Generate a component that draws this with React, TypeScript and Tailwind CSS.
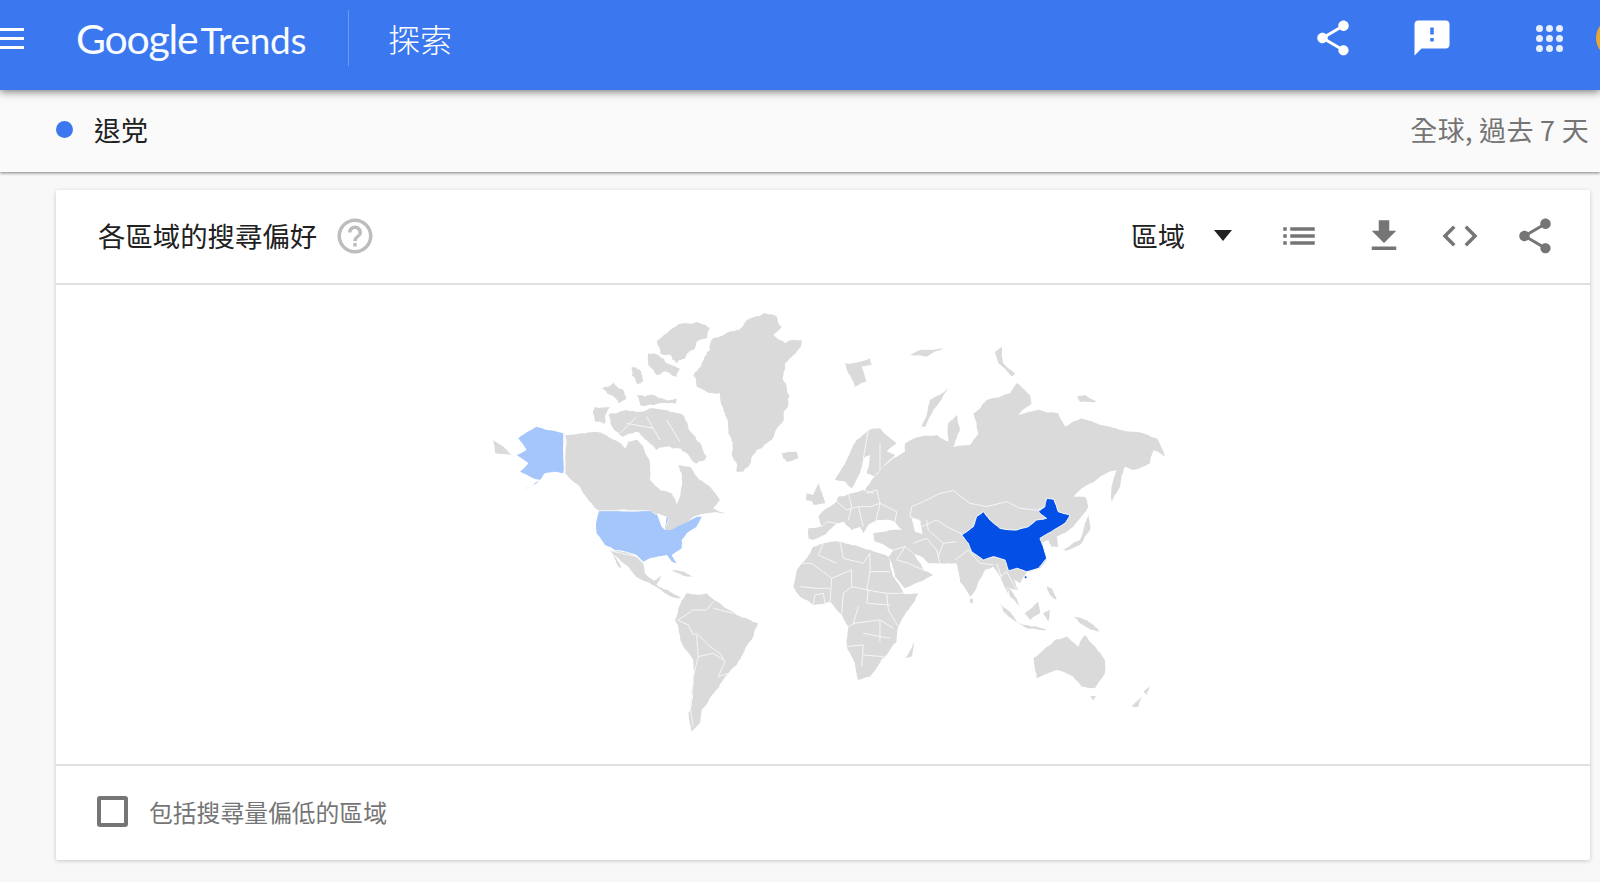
const cjk = "font-['Noto_Sans_CJK_TC','Noto_Sans',sans-serif]";

const share =
  "M18 16.08c-.76 0-1.44.3-1.96.77L8.91 12.7c.05-.23.09-.46.09-.7s-.04-.47-.09-.7l7.05-4.11c.54.5 1.25.81 2.04.81 1.66 0 3-1.34 3-3s-1.34-3-3-3-3 1.34-3 3c0 .24.04.47.09.7L8.04 9.81C7.5 9.31 6.79 9 6 9c-1.66 0-3 1.34-3 3s1.34 3 3 3c.79 0 1.5-.31 2.04-.81l7.12 4.16c-.05.21-.08.43-.08.65 0 1.61 1.31 2.92 2.92 2.92 1.61 0 2.92-1.31 2.92-2.92s-1.31-2.92-2.92-2.92z";
const feedback =
  "M20 2H4c-1.1 0-1.99.9-1.99 2L2 22l4-4h14c1.1 0 2-.9 2-2V4c0-1.1-.9-2-2-2zm-7 12h-2v-2h2v2zm0-4h-2V6h2v4z";
const download = "M19 9h-4V3H9v6H5l7 7 7-7zM5 18v2h14v-2H5z";
const code =
  "M9.4 16.6L4.8 12l4.6-4.6L8 6l-6 6 6 6 1.4-1.4zm5.2 0l4.6-4.6-4.6-4.6L16 6l6 6-6 6-1.4-1.4z";
const list =
  "M3 13h2v-2H3v2zm0 4h2v-2H3v2zm0-8h2V7H3v2zm4 4h14v-2H7v2zm0 4h14v-2H7v2zM7 7v2h14V7H7z";
const help =
  "M11 18h2v-2h-2v2zm1-16C6.48 2 2 6.48 2 12s4.48 10 10 10 10-4.48 10-10S17.52 2 12 2zm0 18c-4.41 0-8-3.59-8-8s3.59-8 8-8 8 3.59 8 8-3.59 8-8 8zm0-14c-2.21 0-4 1.79-4 4h2c0-1.1.9-2 2-2s2 .9 2 2c0 2-3 1.75-3 5h2c0-2.25 3-2.5 3-5 0-2.21-1.79-4-4-4z";

function Icon({ d, className }: { d: string; className: string }) {
  return (
    <svg viewBox="0 0 24 24" className={`h-[42px] w-[42px] shrink-0 fill-current ${className}`}>
      <path d={d} />
    </svg>
  );
}

// coastlines are traced coarse from the picture, then broken up a bit
function roughen(points: string, amount: number, seed: number) {
  let pts = points.split(" ").map((p) => p.split(",").map(Number));
  let s = seed + 1;
  const rnd = () => {
    s = (s * 16807) % 2147483647;
    return (s % 1000) / 1000 - 0.5;
  };
  for (let pass = 0; pass < 3; pass++) {
    const next: number[][] = [];
    pts.forEach((a, i) => {
      const b = pts[(i + 1) % pts.length];
      const dx = b[0] - a[0];
      const dy = b[1] - a[1];
      const k = rnd() * amount;
      next.push(a, [(a[0] + b[0]) / 2 - dy * k, (a[1] + b[1]) / 2 + dx * k]);
    });
    pts = next;
  }
  return pts.map((p) => `${p[0].toFixed(1)},${p[1].toFixed(1)}`).join(" ");
}

const arctic = [
  // greenland
  "640,225 665,190 690,150 700,115 740,100 770,90 800,60 850,40 890,50 905,80 880,105 915,130 965,120 940,165 915,190 920,260 925,310 905,370 875,420 830,450 790,515 770,515 755,460 745,400 735,340 720,280 680,275 650,260",
  "905,460 950,455 945,475 920,485",
  // arctic islands
  "530,125 560,100 610,70 650,65 690,85 680,115 650,125 640,150 615,175 590,190 570,165 540,160",
  "505,160 535,165 560,190 600,205 590,230 560,215 530,225 505,195",
  "455,200 480,210 490,245 470,250",
  "360,265 400,245 430,270 440,295 415,310 390,285",
  "470,285 520,285 590,295 585,312 530,312 480,315",
  "345,320 390,320 375,370 345,365",
  "385,345 440,330 520,325 570,335 610,345 625,385 655,425 680,470 650,490 630,470 600,445 560,440 530,450 500,420 470,395 430,410 400,385",
];

const americas = [
  // canada mainland
  "255,405 310,400 345,395 385,410 415,425 435,445 445,425 470,420 490,440 510,485 510,540 540,570 575,580 590,615 600,590 605,520 595,495 630,500 660,540 690,560 720,600 700,625 735,640 680,640 640,650 600,690 575,690 555,690 565,655 530,645 508,632 355,632 335,610 300,560 255,520",
  // russia tip
  "40,420 70,440 95,465 60,462 45,458",
  // mexico + central america
  "390,752 440,757 470,772 490,790 495,820 522,842 545,825 530,855 565,870 605,893 590,895 555,880 510,850 470,832 445,800 415,775",
  "395,755 425,805 415,800",
  "575,810 610,815 640,832 600,822",
  // south america
  "620,880 680,880 720,910 770,945 835,970 820,1010 790,1060 770,1095 745,1120 715,1165 690,1195 665,1230 660,1270 635,1295 625,1240 640,1140 640,1080 600,1010 585,960 595,925",
];

const usa = [
  "358,632 508,632 530,645 565,655 555,690 575,690 590,680 625,665 650,650 665,650 650,680 620,700 605,720 605,745 575,765 590,790 575,785 560,765 510,775 490,785 470,765 440,755 405,750 375,735 350,700 348,670",
  "250,400 250,520 225,515 195,520 170,550 130,570 180,540 160,535 120,515 145,490 110,465 140,450 115,415 170,380 200,390",
];

const americaBorders = [
  "255,400 255,520",
  "355,632 508,632",
  "390,752 470,770 490,790",
  "595,960 640,930 680,930 700,905",
  "700,925 760,940",
  "590,960 625,975 640,1005 650,1000 690,1040 720,1060 735,1085 715,1130",
  "650,1005 655,1070 640,1130 630,1220 640,1280",
  "655,1070 700,1060 730,1080",
  "715,1130 745,1120",
  "420,400 470,350",
  "500,350 540,420",
  "560,360 600,425",
  "440,370 520,385",
];

const eurasia = [
  // eurasia mainland
  "85,595 125,590 115,560 140,535 170,515 175,500 215,490 255,480 285,440 300,420 340,385 375,365 375,340 420,320 470,315 505,335 505,280 530,255 540,300 520,350 570,345 595,310 580,250 620,210 690,190 710,160 750,195 755,220 715,255 780,240 835,250 855,290 905,265 960,285 1020,300 1090,310 1130,325 1155,380 1120,360 1110,400 1060,420 1035,410 1020,470 995,515 995,470 1010,420 960,440 905,475 880,500 915,500 925,530 905,560 880,590 850,610 830,620 835,650 815,650 805,630 785,640 790,650 800,690 780,715 740,725 720,760 700,745 715,780 680,770 690,800 660,740 640,710 615,720 580,790 570,800 540,755 530,700 480,700 445,700 425,680 400,670 430,720 460,735 440,745 375,775 345,740 325,680 340,660 285,635 280,610 330,600 365,600 345,575 290,570 265,585 250,610 240,590 215,600 190,575 170,580 140,610 100,630 85,625",
  // scandinavia + finland
  "165,450 200,390 230,330 265,300 300,295 350,340 320,365 345,375 300,420 285,440 260,430 270,375 250,385 240,430 215,475 195,455",
  "80,490 100,495 95,515 78,510",
  "95,510 115,460 135,520 100,525",
  "5,370 50,365 55,385 20,395",
  "195,100 270,85 275,105 245,110 260,155 225,170 205,130",
  "425,290 450,210 505,175 460,240 437,290",
  "645,65 665,50 670,100 705,130 695,140 655,100",
  "890,200 915,195 950,215 900,215",
  "390,75 420,60 490,55 440,80",
  // japan
  "850,660 900,630 915,580 925,555 930,600 905,640 860,662",
  // africa
  "90,670 100,650 130,640 180,635 250,655 300,670 325,680 340,740 370,790 415,790 385,840 355,890 350,935 330,960 300,1000 270,1040 235,1050 225,1000 200,950 205,890 185,855 150,815 100,825 60,800 40,770 50,720 65,700",
  "375,985 405,925 395,980",
  // south east asia
  "660,820 690,845 715,880 700,870 670,845",
  "735,850 775,815 780,850 750,870",
  "715,880 770,890 800,900 740,895",
  "800,770 815,775 830,810 810,795",
  "790,850 810,840 805,875",
  "880,860 920,870 960,905 925,895 900,880",
  "680,770 700,790 720,830 690,800",
  "570,805 580,808 578,820 570,818",
  // australia, nz
  "760,985 790,960 825,930 860,920 895,950 915,915 975,990 975,1030 945,1075 905,1070 880,1040 830,1020 770,1045",
  "930,1098 948,1098 940,1112",
  "1055,1130 1085,1100 1075,1130",
  "1090,1085 1110,1070 1100,1095",
];

const china =
  "545,615 580,590 590,560 610,545 630,570 660,595 710,600 745,590 770,570 800,565 775,545 795,530 800,505 822,508 835,545 870,555 855,580 830,595 805,610 780,625 790,650 800,685 775,715 740,725 710,715 685,722 675,690 640,680 610,690 575,665 565,640";

const eurasiaBorders = [
  "395,530 430,515 480,490 520,482 570,520 620,530 680,515 720,535 770,540 795,530",
  "395,530 390,560 425,575",
  "425,590 470,570 500,590 545,612",
  "440,570 445,600 490,640 530,635",
  "400,640 440,625 470,660 480,700",
  "490,640 475,680",
  "525,690 565,660 600,700 640,705",
  "340,660 375,650 400,670",
  "375,650 350,690 385,700 430,720",
  "285,585 300,520 290,480 260,490",
  "170,515 200,540 235,530 270,530 300,520 350,545 345,575",
  "205,490 215,530 205,570",
  "235,530 250,590",
  "125,590 140,575 170,580",
  "660,740 680,725 710,780",
  "650,700 665,745",
  "250,480 280,490",
  "265,300 250,385",
  "300,420 300,340",
  // africa
  "130,640 115,675 170,700",
  "180,635 190,685 250,700 270,670",
  "270,670 270,725 330,725",
  "65,700 95,700 155,745 150,815",
  "155,745 215,720 215,770 265,780 260,820",
  "60,770 110,775 150,775",
  "100,825 105,795 130,790 135,820",
  "215,770 190,790 185,855",
  "270,725 260,780 320,790 370,790",
  "320,790 325,840 355,890",
  "260,820 330,825",
  "235,830 220,880 300,870 300,935",
  "200,950 250,945 245,1010",
  "250,910 330,925",
  "250,975 310,980 300,1000",
  "300,870 340,895",
  "205,890 225,880",
];

function Shapes({ items, fill, amount }: { items: string[]; fill: string; amount: number }) {
  return (
    <>
      {items.map((points, i) => (
        <polygon key={i} points={roughen(points, amount, i * 37 + 11)} fill={fill} />
      ))}
    </>
  );
}

function Lines({ items }: { items: string[] }) {
  return (
    <>
      {items.map((points, i) => (
        <polyline key={i} points={points} fill="none" stroke="#f6f6f6" strokeWidth={3} strokeLinejoin="round" />
      ))}
    </>
  );
}

function WorldMap() {
  const gray = "#dadada";
  return (
    <svg viewBox="0 0 1534 479" className="block h-[479px] w-[1534px]">
      <g transform="translate(424 15) scale(0.3333)">
        <Shapes items={arctic} fill={gray} amount={0.3} />
        <Shapes items={americas} fill={gray} amount={0.14} />
        <Shapes items={usa} fill="#a5c6fb" amount={0.08} />
        <Lines items={americaBorders} />
        <polygon points="530,640 560,650 555,690 545,680" fill="#fff" />
      </g>
      <g transform="translate(724 45) scale(0.3333)">
        <Shapes items={eurasia} fill={gray} amount={0.12} />
        <polygon points="395,565 420,570 428,612 405,605" fill="#fff" />
        <Lines items={eurasiaBorders} />
        <polygon points={roughen(china, 0.06, 5)} fill="#0450e6" stroke="#fff" strokeWidth={3} />
        <circle cx="737" cy="742" r="3" fill="#0450e6" />
      </g>
    </svg>
  );
}

export default function App() {
  return (
    <div className={`h-[882px] w-[1600px] overflow-hidden bg-[#f8f8f8] ${cjk}`}>
      <header className="relative z-20 flex h-[90px] items-center bg-[#3b78f0] pb-[14px] text-white shadow-[0_2px_8px_rgba(0,0,0,0.5)]">
        <div className="flex w-[24px] flex-col gap-[6px]">
          <div className="h-[3px] bg-white" />
          <div className="h-[3px] bg-white" />
          <div className="h-[3px] bg-white" />
        </div>
        <div className="ml-[52px] flex w-[229px] items-baseline whitespace-nowrap font-['Lato',sans-serif] leading-none text-[#f8fbff]">
          <span className="text-[41px] tracking-[-1.2px]">Google</span>
          <span className="ml-[3px] text-[37px] tracking-[-0.3px]">Trends</span>
        </div>
        <div className="ml-[43px] h-[56px] w-px bg-white/25" />
        <div className="ml-[39px] text-[32px] font-light leading-none">探索</div>
        <div className="ml-auto flex items-center">
          <Icon d={share} className="text-white" />
          <Icon d={feedback} className="ml-[57px] text-white" />
          <div className="ml-[81px] grid w-[31px] shrink-0 grid-cols-3 justify-items-center gap-y-[3px]">
            {Array.from({ length: 9 }).map((_, i) => (
              <div key={i} className="h-[7px] w-[7px] rounded-full bg-[#e6efff]" />
            ))}
          </div>
          <div className="ml-[31px] -mr-[36px] h-[40px] w-[40px] shrink-0 rounded-full bg-[#e8a633]" />
        </div>
      </header>

      <div className="relative z-10 flex h-[82px] items-center bg-[#fafafa] pb-[4px] pl-[56px] pr-[11px] shadow-[0_1px_3px_rgba(0,0,0,0.5)]">
        <div className="h-[17px] w-[17px] rounded-full bg-[#3b78f0]" />
        <div className="ml-[21px] text-[27px] leading-none text-[#212121]">退党</div>
        <div className="ml-auto text-[27px] leading-none tracking-[0.3px] text-[#757575]">全球, 過去 7 天</div>
      </div>

      <section className="ml-[56px] mt-[18px] w-[1534px] rounded-[2px] bg-white shadow-[0_1px_4px_rgba(0,0,0,0.2)]">
        <div className="flex h-[95px] items-center border-b-2 border-[#e0e0e0] pb-[2px] pl-[42px] pr-[34px]">
          <div className="text-[27.4px] leading-none text-[#212121]">各區域的搜尋偏好</div>
          <Icon d={help} className="ml-[17px] text-[#bdbdbd]" />
          <div className="ml-auto text-[27px] leading-none text-[#212121]">區域</div>
          <svg viewBox="0 0 18 11" className="ml-[29px] h-[11px] w-[18px] fill-[#212121]">
            <path d="M0 0h18L9 11z" />
          </svg>
          <Icon d={list} className="ml-[46px] text-[#757575]" />
          <Icon d={download} className="ml-[43px] text-[#757575]" />
          <Icon d={code} className="ml-[34px] text-[#757575]" />
          <Icon d={share} className="ml-[33px] text-[#757575]" />
        </div>
        <WorldMap />
        <div className="flex h-[96px] items-center border-t-2 border-[#e0e0e0] pb-[3px] pl-[41px]">
          <div className="h-[31px] w-[31px] rounded-[3px] border-4 border-[#757575]" />
          <div className="ml-[21px] text-[23.8px] leading-none text-[#757575]">包括搜尋量偏低的區域</div>
        </div>
      </section>
    </div>
  );
}
